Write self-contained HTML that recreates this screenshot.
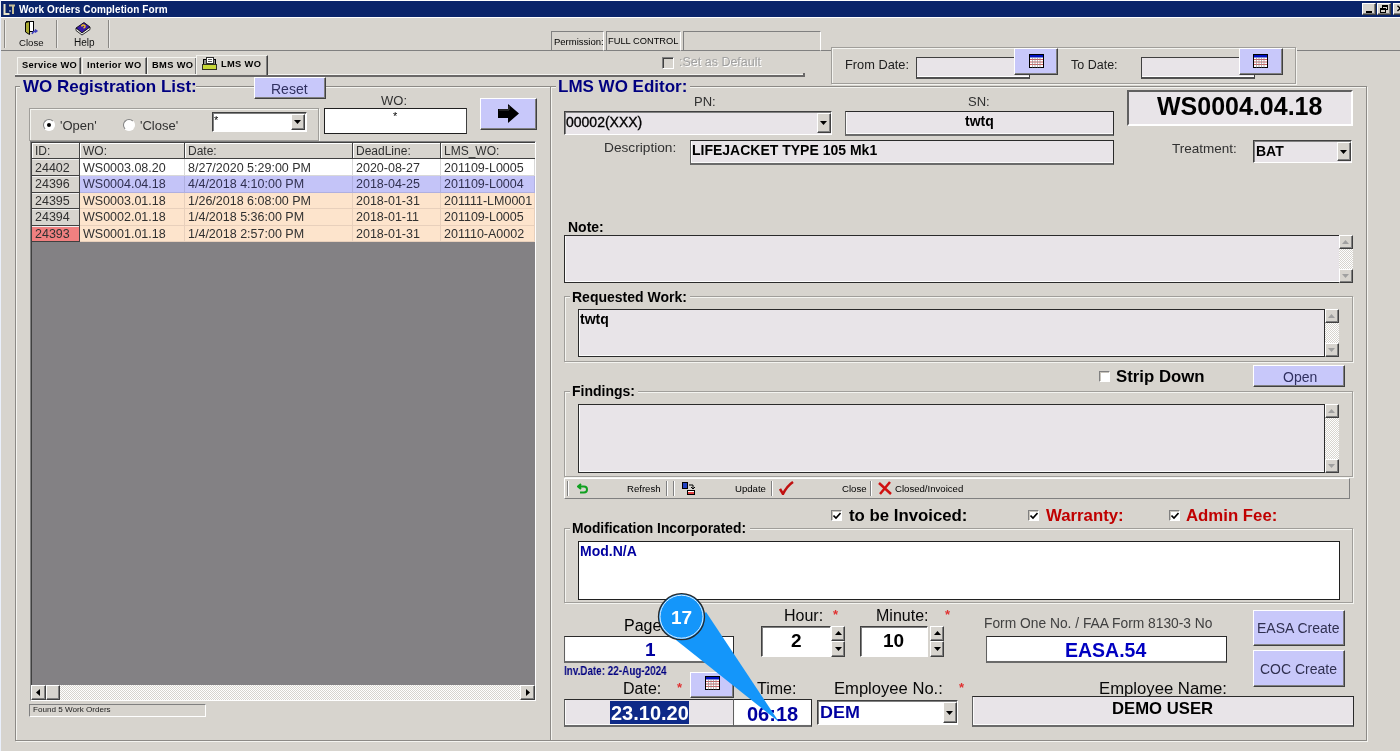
<!DOCTYPE html>
<html><head><meta charset="utf-8">
<style>
*{margin:0;padding:0;box-sizing:border-box}
html,body{width:1400px;height:751px;overflow:hidden;background:#d7d4ce;font-family:"Liberation Sans",sans-serif;color:#000}
.a{position:absolute}
.t{position:absolute;white-space:nowrap;line-height:1;will-change:transform}
.sk{position:absolute;border:1px solid;border-color:#808080 #fff #fff #808080}
.sk2{position:absolute;border:1px solid;border-color:#404040 #fff #fff #404040;box-shadow:inset 1px 1px 0 #808080}
.rz{position:absolute;border:1px solid;border-color:#fff #404040 #404040 #fff;box-shadow:inset -1px -1px 0 #808080}
.et{position:absolute;border:1px solid #a09e9a;box-shadow:1px 1px 0 #f4f4f0, inset 1px 1px 0 #f4f4f0}
.inp{background:#e8e4e8}
.lav{background:#c8c8fa}
.b{font-weight:bold}
.navy{color:#000080}
.cb{position:absolute;width:11px;height:11px;background:#fff;border:1px solid;border-color:#808080 #fff #fff #808080;box-shadow:inset 1px 1px 0 #c8c4bc}
</style></head><body>
<!-- window frame / title -->
<div class="a" style="left:0;top:0;width:1400px;height:1px;background:#fff"></div>
<div class="a" style="left:0;top:0;width:1px;height:751px;background:#eaf0fc"></div>
<div class="a" style="left:1px;top:1px;width:1399px;height:16px;background:#0a246a"></div>
<svg class="a" style="left:3px;top:3px" width="13" height="12" viewBox="0 0 13 12"><path d="M1.5 1v10h5" stroke="#e8e4c8" stroke-width="2" fill="none"/><path d="M6 2.5h6M10 2.5v8.5" stroke="#c8c098" stroke-width="2" fill="none"/><circle cx="7" cy="8" r="0.8" fill="#fff"/></svg>
<div class="t b" style="left:19px;top:4.5px;font-size:10px;color:#fff;letter-spacing:0.1px">Work Orders Completion Form</div>
<div class="rz" style="left:1362px;top:3px;width:14px;height:12px;background:#d7d4ce"><div class="a" style="left:3px;top:7px;width:6px;height:2px;background:#000"></div></div>
<div class="rz" style="left:1377px;top:3px;width:14px;height:12px;background:#d7d4ce"><div class="a" style="left:4px;top:1px;width:6px;height:5px;border:1px solid #000;border-top-width:2px"></div><div class="a" style="left:2px;top:4px;width:6px;height:5px;border:1px solid #000;border-top-width:2px;background:#d7d4ce"></div></div>
<div class="rz" style="left:1393px;top:3px;width:14px;height:12px;background:#d7d4ce"><div class="t b" style="left:2px;top:0px;font-size:10px">✕</div></div>

<!-- toolbar -->
<div class="a" style="left:1px;top:17px;width:1399px;height:1px;background:#fff"></div>
<div class="a" style="left:4px;top:20px;width:2px;height:28px;border-left:1px solid #8a8884;border-right:1px solid #ecebe8"></div>
<div class="a" style="left:56px;top:20px;width:2px;height:28px;border-left:1px solid #8a8884;border-right:1px solid #ecebe8"></div>
<div class="a" style="left:108px;top:20px;width:2px;height:28px;border-left:1px solid #8a8884;border-right:1px solid #ecebe8"></div>
<div class="a" style="left:1px;top:50px;width:1399px;height:1px;background:#808080"></div>
<!-- close icon -->
<svg class="a" style="left:24px;top:20px" width="15" height="16" viewBox="0 0 15 16">
<rect x="2.5" y="1.5" width="7" height="10" fill="#fff" stroke="#000"/>
<path d="M1.5 2.5 L5.5 1.5 L5.5 14.5 L1.5 12 Z" fill="#a8a830" stroke="#000" stroke-width="1"/>
<path d="M8 14 q1 -3 4 -3 M11 9.5 l2 1.5 l-2 1.5" stroke="#4040c0" stroke-width="1.3" fill="none"/>
</svg>
<div class="t" style="left:19px;top:37.6px;font-size:9.6px;color:#101010">Close</div>
<!-- help icon -->
<svg class="a" style="left:75px;top:21px" width="16" height="15" viewBox="0 0 16 15">
<path d="M1 7 L9 1.5 L15 6 L7 12 Z" fill="#3818a8" stroke="#000" stroke-width="0.8"/>
<path d="M1 7 L1 9.5 L7 14 L15 8.5 L15 6 L7 12 Z" fill="#f4f4f4" stroke="#000" stroke-width="0.8"/>
<path d="M6.5 5.5 q1.5 -2.5 3.5 -0.8 q0.5 1.5 -1.5 2.5" stroke="#f0c020" stroke-width="1.5" fill="none"/>
</svg>
<div class="t" style="left:74px;top:38px;font-size:10px;color:#101010">Help</div>

<!-- permission -->
<div class="sk" style="left:551px;top:31px;width:53px;height:20px;border-bottom-color:transparent"></div>
<div class="t" style="left:554px;top:37px;font-size:9.5px">Permission:</div>
<div class="sk" style="left:606px;top:31px;width:75px;height:20px;border-bottom-color:transparent"></div>
<div class="t" style="left:608px;top:37px;font-size:9.3px">FULL CONTROL</div>
<div class="sk" style="left:683px;top:31px;width:138px;height:20px;border-bottom-color:transparent"></div>

<!-- tabs -->
<div class="a" style="left:15px;top:74px;width:790px;height:1px;background:#f4f4f0"></div><div class="a" style="left:15px;top:75px;width:790px;height:2px;background:#6a6868"></div><div class="a" style="left:803px;top:73px;width:2px;height:3px;background:#6a6868"></div>
<div class="rz" style="left:17px;top:57px;width:64px;height:17px;background:#d7d4ce;border-bottom:none;box-shadow:inset -1px 0 0 #808080;border-top-color:#f4f4f0;border-left-color:#f4f4f0"></div>
<div class="t b" style="left:22px;top:61px;font-size:9.3px;letter-spacing:0.35px">Service WO</div>
<div class="rz" style="left:82px;top:57px;width:65px;height:17px;background:#d7d4ce;border-bottom:none;box-shadow:inset -1px 0 0 #808080;border-top-color:#f4f4f0;border-left-color:#f4f4f0"></div>
<div class="t b" style="left:87px;top:61px;font-size:9.3px;letter-spacing:0.35px">Interior WO</div>
<div class="rz" style="left:147px;top:57px;width:50px;height:17px;background:#d7d4ce;border-bottom:none;box-shadow:inset -1px 0 0 #808080;border-top-color:#f4f4f0;border-left-color:#f4f4f0"></div>
<div class="t b" style="left:152px;top:61px;font-size:9.3px;letter-spacing:0.35px">BMS WO</div>
<div class="rz" style="left:196px;top:55px;width:72px;height:20px;background:#d7d4ce;border-bottom:none;box-shadow:inset -1px 0 0 #808080;border-top-color:#f0f0ec;border-left-color:#f4f4f0"></div>
<svg class="a" style="left:202px;top:57px" width="15" height="13" viewBox="0 0 15 13"><rect x="1.5" y="2.5" width="12" height="6" fill="#909090" stroke="#000"/><rect x="4.5" y="0.5" width="7" height="6" fill="#fff" stroke="#303030"/><path d="M6 2.5h4M6 4.5h4" stroke="#606060"/><rect x="0.5" y="7.5" width="14" height="5" fill="#c8d838" stroke="#303020"/></svg>
<div class="t b" style="left:221px;top:60px;font-size:9.3px;letter-spacing:0.35px">LMS WO</div>

<!-- set as default -->
<div class="a" style="left:662px;top:57px;width:12px;height:12px;border:1px solid;border-color:#808080 #fff #fff #808080;box-shadow:inset 1px 1px 0 #404040, inset -1px -1px 0 #d7d4ce"></div>
<div class="t" style="left:679px;top:55.5px;font-size:12.5px;color:#a0a0a0;text-shadow:1px 1px 0 #fff">:Set as Default</div>

<!-- date group -->
<div class="et" style="left:831px;top:47px;width:465px;height:37px;background:#d7d4ce"></div>
<div class="t" style="left:845px;top:58.5px;font-size:12.8px;color:#202020">From Date:</div>
<div class="a inp" style="left:916px;top:57px;width:114px;height:22px;border:1px solid #404040;border-bottom:2px solid #505050;box-shadow:inset 0 -1px 0 #fff"></div>
<div class="rz lav" style="left:1014px;top:48px;width:44px;height:27px"></div><svg class="a" style="left:1029px;top:54px" width="15" height="14" viewBox="0 0 15 14"><rect x="0.5" y="0.5" width="14" height="13" fill="#fff" stroke="#000"/><rect x="1" y="1" width="13" height="2.5" fill="#0010c0"/><path d="M1 5.5h13M1 8h13M1 10.5h13" stroke="#d06060" stroke-width="1"/><path d="M3.5 3.5v10M6 3.5v10M8.5 3.5v10M11 3.5v10" stroke="#909090" stroke-width="0.7"/></svg>
<div class="t" style="left:1071px;top:59px;font-size:12.5px;color:#202020">To Date:</div>
<div class="a inp" style="left:1141px;top:57px;width:114px;height:22px;border:1px solid #404040;border-bottom:2px solid #505050;box-shadow:inset 0 -1px 0 #fff"></div>
<div class="rz lav" style="left:1239px;top:48px;width:44px;height:27px"></div><svg class="a" style="left:1253px;top:54px" width="15" height="14" viewBox="0 0 15 14"><rect x="0.5" y="0.5" width="14" height="13" fill="#fff" stroke="#000"/><rect x="1" y="1" width="13" height="2.5" fill="#0010c0"/><path d="M1 5.5h13M1 8h13M1 10.5h13" stroke="#d06060" stroke-width="1"/><path d="M3.5 3.5v10M6 3.5v10M8.5 3.5v10M11 3.5v10" stroke="#909090" stroke-width="0.7"/></svg>

<!-- ===== LEFT PANEL ===== -->
<div class="et" style="left:15px;top:86px;width:536px;height:655px;border-color:#8c8a86"></div>
<div class="a" style="left:20px;top:80px;width:176px;height:14px;background:#d7d4ce"></div>
<div class="t b navy" style="left:23px;top:78px;font-size:17px">WO Registration List:</div>
<div class="rz lav" style="left:254px;top:77px;width:72px;height:22px"></div>
<div class="t" style="left:271px;top:82px;font-size:14px;color:#303060">Reset</div>

<div class="et" style="left:29px;top:108px;width:290px;height:33px"></div>
<div class="a" style="left:43px;top:119px;width:12px;height:12px;border-radius:50%;background:#fff;border:1px solid;border-color:#808080 #fff #fff #808080"></div>
<div class="a" style="left:47px;top:123px;width:4px;height:4px;border-radius:50%;background:#000"></div>
<div class="t" style="left:60px;top:119px;font-size:13px;color:#303030">'Open'</div>
<div class="a" style="left:123px;top:119px;width:12px;height:12px;border-radius:50%;background:#fff;border:1px solid;border-color:#808080 #fff #fff #808080"></div>
<div class="t" style="left:140px;top:119px;font-size:13px;color:#303030">'Close'</div>
<div class="sk2" style="left:212px;top:112px;width:95px;height:20px;background:#fff"></div>
<div class="t" style="left:214px;top:115px;font-size:11px">*</div>
<div class="rz" style="left:291px;top:114px;width:14px;height:16px;background:#d7d4ce"></div>
<svg class="a" style="left:294px;top:120px" width="8" height="4"><path d="M0 0h7l-3.5 4z" fill="#000"/></svg>

<div class="t" style="left:381px;top:94px;font-size:13px;color:#303030">WO:</div>
<div class="a" style="left:324px;top:108px;width:143px;height:26px;background:#fff;border:1px solid #202020;border-right-color:#404040"></div>
<div class="t" style="left:393px;top:111px;font-size:11px">*</div>
<div class="rz lav" style="left:480px;top:98px;width:57px;height:32px"></div>
<svg class="a" style="left:498px;top:104px" width="22" height="19" viewBox="0 0 22 19"><path d="M0 5h10V0l11 9.5L10 19v-5H0z" fill="#000"/><path d="M1 6h10V2" stroke="#404040" fill="none"/></svg>

<!-- grid -->
<div class="a" style="left:30px;top:141px;width:506px;height:560px;border:1px solid;border-color:#808080 #fff #fff #808080"></div>
<div class="a" style="left:31px;top:142px;width:504px;height:543px;background:#838184;border-left:1px solid #404040;border-top:1px solid #404040"></div>
<div class="a" style="left:32px;top:143px;width:48px;height:16px;background:#d7d4ce;border-right:1px solid #404040;border-bottom:1px solid #404040;box-shadow:inset 1px 1px 0 #fff"></div>
<div class="t" style="left:35px;top:144.5px;font-size:12px;color:#303030">ID:</div>
<div class="a" style="left:80px;top:143px;width:105px;height:16px;background:#d7d4ce;border-right:1px solid #404040;border-bottom:1px solid #404040;box-shadow:inset 1px 1px 0 #fff"></div>
<div class="t" style="left:83px;top:144.5px;font-size:12px;color:#303030">WO:</div>
<div class="a" style="left:185px;top:143px;width:168px;height:16px;background:#d7d4ce;border-right:1px solid #404040;border-bottom:1px solid #404040;box-shadow:inset 1px 1px 0 #fff"></div>
<div class="t" style="left:188px;top:144.5px;font-size:12px;color:#303030">Date:</div>
<div class="a" style="left:353px;top:143px;width:88px;height:16px;background:#d7d4ce;border-right:1px solid #404040;border-bottom:1px solid #404040;box-shadow:inset 1px 1px 0 #fff"></div>
<div class="t" style="left:356px;top:144.5px;font-size:12px;color:#303030">DeadLine:</div>
<div class="a" style="left:441px;top:143px;width:94px;height:16px;background:#d7d4ce;border-right:none;border-bottom:1px solid #404040;box-shadow:inset 1px 1px 0 #fff"></div>
<div class="t" style="left:444px;top:144.5px;font-size:12px;color:#303030">LMS_WO:</div>
<div class="a" style="left:32px;top:159px;width:48px;height:17px;background:#d7d4ce;border-right:1px solid #404040;border-bottom:1px solid #404040;box-shadow:inset 0 1px 0 #f0f0f0"></div>
<div class="t" style="left:35px;top:161.5px;font-size:12.5px;color:#303030">24402</div>
<div class="a" style="left:80px;top:159px;width:105px;height:17px;background:#ffffff;border-right:1px solid #d8d8d8;border-bottom:1px solid #d8d8d8"></div>
<div class="t" style="left:83px;top:161.5px;font-size:12.5px;color:#303030">WS0003.08.20</div>
<div class="a" style="left:185px;top:159px;width:168px;height:17px;background:#ffffff;border-right:1px solid #d8d8d8;border-bottom:1px solid #d8d8d8"></div>
<div class="t" style="left:188px;top:161.5px;font-size:12.5px;color:#303030">8/27/2020 5:29:00 PM</div>
<div class="a" style="left:353px;top:159px;width:88px;height:17px;background:#ffffff;border-right:1px solid #d8d8d8;border-bottom:1px solid #d8d8d8"></div>
<div class="t" style="left:356px;top:161.5px;font-size:12.5px;color:#303030">2020-08-27</div>
<div class="a" style="left:441px;top:159px;width:94px;height:17px;background:#ffffff;border-right:1px solid #d8d8d8;border-bottom:1px solid #d8d8d8"></div>
<div class="t" style="left:444px;top:161.5px;font-size:12.5px;color:#303030">201109-L0005</div>
<div class="a" style="left:32px;top:176px;width:48px;height:17px;background:#d7d4ce;border-right:1px solid #404040;border-bottom:1px solid #404040;box-shadow:inset 0 1px 0 #f0f0f0"></div>
<div class="t" style="left:35px;top:177.5px;font-size:12.5px;color:#303030">24396</div>
<div class="a" style="left:80px;top:176px;width:105px;height:17px;background:#c4c4f8;border-right:1px solid #b0b0e0;border-bottom:1px solid #b0b0e0"></div>
<div class="t" style="left:83px;top:177.5px;font-size:12.5px;color:#303050">WS0004.04.18</div>
<div class="a" style="left:185px;top:176px;width:168px;height:17px;background:#c4c4f8;border-right:1px solid #b0b0e0;border-bottom:1px solid #b0b0e0"></div>
<div class="t" style="left:188px;top:177.5px;font-size:12.5px;color:#303050">4/4/2018 4:10:00 PM</div>
<div class="a" style="left:353px;top:176px;width:88px;height:17px;background:#c4c4f8;border-right:1px solid #b0b0e0;border-bottom:1px solid #b0b0e0"></div>
<div class="t" style="left:356px;top:177.5px;font-size:12.5px;color:#303050">2018-04-25</div>
<div class="a" style="left:441px;top:176px;width:94px;height:17px;background:#c4c4f8;border-right:1px solid #b0b0e0;border-bottom:1px solid #b0b0e0"></div>
<div class="t" style="left:444px;top:177.5px;font-size:12.5px;color:#303050">201109-L0004</div>
<div class="a" style="left:32px;top:193px;width:48px;height:16px;background:#d7d4ce;border-right:1px solid #404040;border-bottom:1px solid #404040;box-shadow:inset 0 1px 0 #f0f0f0"></div>
<div class="t" style="left:35px;top:195px;font-size:12.5px;color:#303030">24395</div>
<div class="a" style="left:80px;top:193px;width:105px;height:16px;background:#fde4cc;border-right:1px solid #e8d0bc;border-bottom:1px solid #e8d0bc"></div>
<div class="t" style="left:83px;top:195px;font-size:12.5px;color:#303030">WS0003.01.18</div>
<div class="a" style="left:185px;top:193px;width:168px;height:16px;background:#fde4cc;border-right:1px solid #e8d0bc;border-bottom:1px solid #e8d0bc"></div>
<div class="t" style="left:188px;top:195px;font-size:12.5px;color:#303030">1/26/2018 6:08:00 PM</div>
<div class="a" style="left:353px;top:193px;width:88px;height:16px;background:#fde4cc;border-right:1px solid #e8d0bc;border-bottom:1px solid #e8d0bc"></div>
<div class="t" style="left:356px;top:195px;font-size:12.5px;color:#303030">2018-01-31</div>
<div class="a" style="left:441px;top:193px;width:94px;height:16px;background:#fde4cc;border-right:1px solid #e8d0bc;border-bottom:1px solid #e8d0bc"></div>
<div class="t" style="left:444px;top:195px;font-size:12.5px;color:#303030">201111-LM0001</div>
<div class="a" style="left:32px;top:209px;width:48px;height:17px;background:#d7d4ce;border-right:1px solid #404040;border-bottom:1px solid #404040;box-shadow:inset 0 1px 0 #f0f0f0"></div>
<div class="t" style="left:35px;top:211px;font-size:12.5px;color:#303030">24394</div>
<div class="a" style="left:80px;top:209px;width:105px;height:17px;background:#fde4cc;border-right:1px solid #e8d0bc;border-bottom:1px solid #e8d0bc"></div>
<div class="t" style="left:83px;top:211px;font-size:12.5px;color:#303030">WS0002.01.18</div>
<div class="a" style="left:185px;top:209px;width:168px;height:17px;background:#fde4cc;border-right:1px solid #e8d0bc;border-bottom:1px solid #e8d0bc"></div>
<div class="t" style="left:188px;top:211px;font-size:12.5px;color:#303030">1/4/2018 5:36:00 PM</div>
<div class="a" style="left:353px;top:209px;width:88px;height:17px;background:#fde4cc;border-right:1px solid #e8d0bc;border-bottom:1px solid #e8d0bc"></div>
<div class="t" style="left:356px;top:211px;font-size:12.5px;color:#303030">2018-01-11</div>
<div class="a" style="left:441px;top:209px;width:94px;height:17px;background:#fde4cc;border-right:1px solid #e8d0bc;border-bottom:1px solid #e8d0bc"></div>
<div class="t" style="left:444px;top:211px;font-size:12.5px;color:#303030">201109-L0005</div>
<div class="a" style="left:32px;top:226px;width:48px;height:16px;background:#f08080;border-right:1px solid #404040;border-bottom:1px solid #404040;box-shadow:inset 0 1px 0 #f0f0f0"></div>
<div class="t" style="left:35px;top:227.5px;font-size:12.5px;color:#303030">24393</div>
<div class="a" style="left:80px;top:226px;width:105px;height:16px;background:#fde4cc;border-right:1px solid #e8d0bc;border-bottom:1px solid #e8d0bc"></div>
<div class="t" style="left:83px;top:227.5px;font-size:12.5px;color:#303030">WS0001.01.18</div>
<div class="a" style="left:185px;top:226px;width:168px;height:16px;background:#fde4cc;border-right:1px solid #e8d0bc;border-bottom:1px solid #e8d0bc"></div>
<div class="t" style="left:188px;top:227.5px;font-size:12.5px;color:#303030">1/4/2018 2:57:00 PM</div>
<div class="a" style="left:353px;top:226px;width:88px;height:16px;background:#fde4cc;border-right:1px solid #e8d0bc;border-bottom:1px solid #e8d0bc"></div>
<div class="t" style="left:356px;top:227.5px;font-size:12.5px;color:#303030">2018-01-31</div>
<div class="a" style="left:441px;top:226px;width:94px;height:16px;background:#fde4cc;border-right:1px solid #e8d0bc;border-bottom:1px solid #e8d0bc"></div>
<div class="t" style="left:444px;top:227.5px;font-size:12.5px;color:#303030">201110-A0002</div>
<!-- hscroll -->
<div class="a" style="left:31px;top:685px;width:504px;height:15px;background:repeating-conic-gradient(#fff 0 25%, #d7d4ce 0 50%) 0 0/2px 2px"></div>
<div class="rz" style="left:31px;top:685px;width:15px;height:15px;background:#d7d4ce"></div>
<svg class="a" style="left:36px;top:689px" width="4" height="7"><path d="M4 0v7L0 3.5z" fill="#000"/></svg>
<div class="rz" style="left:46px;top:685px;width:14px;height:15px;background:#d7d4ce"></div>
<div class="rz" style="left:520px;top:685px;width:15px;height:15px;background:#d7d4ce"></div>
<svg class="a" style="left:526px;top:689px" width="4" height="7"><path d="M0 0v7L4 3.5z" fill="#000"/></svg>
<div class="sk" style="left:29px;top:704px;width:177px;height:13px"></div>
<div class="t" style="left:33px;top:706px;font-size:8.1px;color:#202020">Found 5 Work Orders</div>

<!-- ===== RIGHT PANEL ===== -->
<div class="et" style="left:550px;top:86px;width:817px;height:655px;border-color:#8c8a86"></div>
<div class="a" style="left:556px;top:80px;width:134px;height:14px;background:#d7d4ce"></div>
<div class="t b navy" style="left:558px;top:78px;font-size:17px">LMS WO Editor:</div>

<div class="t" style="left:694px;top:95px;font-size:13px;color:#303030">PN:</div>
<div class="sk2 inp" style="left:564px;top:111px;width:268px;height:24px"></div>
<div class="t" style="left:566px;top:114.5px;font-size:14px;-webkit-text-stroke:0.35px #000">00002(XXX)</div>
<div class="rz" style="left:817px;top:113px;width:14px;height:20px;background:#d7d4ce"></div>
<svg class="a" style="left:820px;top:121px" width="8" height="4"><path d="M0 0h7l-3.5 4z" fill="#000"/></svg>

<div class="t" style="left:968px;top:95px;font-size:13px;color:#303030">SN:</div>
<div class="a inp" style="left:845px;top:111px;width:269px;height:25px;border:1px solid #2a2a2a;border-left-color:#606060;border-bottom:2px solid #6a6a6a;box-shadow:inset 1px -1px 0 #fbfbfb"></div>
<div class="t b" style="left:965px;top:114px;font-size:14px">twtq</div>

<div class="a inp" style="left:1127px;top:90px;width:226px;height:36px;border:2px solid;border-color:#606060 #fff #fff #606060"></div>
<div class="t b" style="left:1157px;top:93.5px;font-size:25px">WS0004.04.18</div>

<div class="t" style="left:604px;top:141px;font-size:13.7px;color:#303030">Description:</div>
<div class="a inp" style="left:690px;top:140px;width:424px;height:25px;border:1px solid #2a2a2a;border-left-color:#606060;border-bottom:2px solid #6a6a6a;box-shadow:inset 1px -1px 0 #fbfbfb"></div>
<div class="t b" style="left:692px;top:142.5px;font-size:14px">LIFEJACKET TYPE 105 Mk1</div>

<div class="t" style="left:1172px;top:141.5px;font-size:13.5px;color:#303030">Treatment:</div>
<div class="sk2 inp" style="left:1253px;top:140px;width:99px;height:23px"></div>
<div class="t b" style="left:1256px;top:143.5px;font-size:14px">BAT</div>
<div class="rz" style="left:1337px;top:142px;width:14px;height:19px;background:#d7d4ce"></div>
<svg class="a" style="left:1340px;top:150px" width="8" height="4"><path d="M0 0h7l-3.5 4z" fill="#000"/></svg>

<!-- note -->
<div class="t b" style="left:568px;top:220px;font-size:14px">Note:</div>
<div class="a inp" style="left:564px;top:235px;width:776px;height:48px;border:1px solid #2a2a2a;box-shadow:inset 1px -1px 0 #fbfbfb"></div>
<div class="a" id="vs1" style="left:1339px;top:235px;width:14px;height:48px;background:repeating-conic-gradient(#fff 0 25%, #d7d4ce 0 50%) 0 0/2px 2px"></div>
<div class="rz" style="left:1339px;top:235px;width:14px;height:14px;background:#d7d4ce"></div>
<div class="rz" style="left:1339px;top:269px;width:14px;height:14px;background:#d7d4ce"></div>
<svg class="a" style="left:1342px;top:240px" width="7" height="4"><path d="M0 4h7L3.5 0z" fill="#a0a0a0"/></svg>
<svg class="a" style="left:1342px;top:274px" width="7" height="4"><path d="M0 0h7L3.5 4z" fill="#a0a0a0"/></svg>

<!-- requested work -->
<div class="et" style="left:564px;top:296px;width:789px;height:66px"></div>
<div class="a" style="left:570px;top:290px;width:120px;height:12px;background:#d7d4ce"></div>
<div class="t b" style="left:572px;top:290px;font-size:14px">Requested Work:</div>
<div class="a inp" style="left:578px;top:309px;width:747px;height:48px;border:1px solid #2a2a2a;box-shadow:inset 1px -1px 0 #fbfbfb"></div>
<div class="t b" style="left:580px;top:312px;font-size:14px">twtq</div>
<div class="a" style="left:1325px;top:309px;width:14px;height:48px;background:repeating-conic-gradient(#fff 0 25%, #d7d4ce 0 50%) 0 0/2px 2px"></div>
<div class="rz" style="left:1325px;top:309px;width:14px;height:14px;background:#d7d4ce"></div>
<div class="rz" style="left:1325px;top:343px;width:14px;height:14px;background:#d7d4ce"></div>
<svg class="a" style="left:1328px;top:314px" width="7" height="4"><path d="M0 4h7L3.5 0z" fill="#a0a0a0"/></svg>
<svg class="a" style="left:1328px;top:348px" width="7" height="4"><path d="M0 0h7L3.5 4z" fill="#a0a0a0"/></svg>

<!-- strip down / open -->
<div class="cb" style="left:1099px;top:371px"></div>
<div class="t b" style="left:1116px;top:368.5px;font-size:16.8px">Strip Down</div>
<div class="rz lav" style="left:1253px;top:365px;width:92px;height:22px"></div>
<div class="t" style="left:1283px;top:370px;font-size:14px;color:#303060">Open</div>

<!-- findings -->
<div class="et" style="left:564px;top:391px;width:789px;height:86px"></div>
<div class="a" style="left:570px;top:385px;width:68px;height:12px;background:#d7d4ce"></div>
<div class="t b" style="left:572px;top:384px;font-size:14px">Findings:</div>
<div class="a inp" style="left:578px;top:404px;width:747px;height:69px;border:1px solid #2a2a2a;box-shadow:inset 1px -1px 0 #fbfbfb"></div>
<div class="a" style="left:1325px;top:404px;width:14px;height:69px;background:repeating-conic-gradient(#fff 0 25%, #d7d4ce 0 50%) 0 0/2px 2px"></div>
<div class="rz" style="left:1325px;top:404px;width:14px;height:14px;background:#d7d4ce"></div>
<div class="rz" style="left:1325px;top:459px;width:14px;height:14px;background:#d7d4ce"></div>
<svg class="a" style="left:1328px;top:409px" width="7" height="4"><path d="M0 4h7L3.5 0z" fill="#a0a0a0"/></svg>
<svg class="a" style="left:1328px;top:464px" width="7" height="4"><path d="M0 0h7L3.5 4z" fill="#a0a0a0"/></svg>

<!-- findings toolbar -->
<div class="a" style="left:564px;top:478px;width:786px;height:21px;border:1px solid;border-color:#fff #808080 #808080 #fff"></div>
<div class="a" style="left:567px;top:481px;width:2px;height:15px;border-left:1px solid #808080;border-right:1px solid #fff"></div>
<svg class="a" style="left:577px;top:483px" width="12" height="11" viewBox="0 0 12 11"><path d="M4 1 L1 3.5 L4 6 M1.5 3.5 H7 a3 3 0 0 1 0 6 H3" stroke="#10a020" stroke-width="2" fill="none"/></svg>
<div class="t" style="left:627px;top:484px;font-size:9.6px;color:#000">Refresh</div>
<div class="a" style="left:666px;top:481px;width:2px;height:15px;border-left:1px solid #808080;border-right:1px solid #fff"></div>
<div class="a" style="left:673px;top:481px;width:2px;height:15px;border-left:1px solid #808080;border-right:1px solid #fff"></div>
<svg class="a" style="left:682px;top:482px" width="14" height="13" viewBox="0 0 14 13"><rect x="0.5" y="0.5" width="5" height="6" fill="#2040c0" stroke="#000"/><path d="M7 3h4v4 M9 5l2 2l2-2" stroke="#000" fill="none"/><rect x="5.5" y="8.5" width="7" height="4" fill="#fff" stroke="#000"/><rect x="6" y="10" width="6" height="2" fill="#e04040"/></svg>
<div class="t" style="left:735px;top:484px;font-size:9.6px;color:#000">Update</div>
<div class="a" style="left:771px;top:481px;width:2px;height:15px;border-left:1px solid #808080;border-right:1px solid #fff"></div>
<svg class="a" style="left:779px;top:481px" width="15" height="14" viewBox="0 0 15 14"><path d="M1 8 L4 13 Q8 5 14 1" stroke="#c01010" stroke-width="2.5" fill="none"/></svg>
<div class="t" style="left:842px;top:484px;font-size:9.6px;color:#000">Close</div>
<div class="a" style="left:870px;top:481px;width:2px;height:15px;border-left:1px solid #808080;border-right:1px solid #fff"></div>
<svg class="a" style="left:878px;top:481px" width="14" height="14" viewBox="0 0 14 14"><path d="M1 2 L13 13 M12 1 L2 13" stroke="#d01010" stroke-width="2.5" fill="none"/></svg>
<div class="t" style="left:895px;top:484px;font-size:9.6px;color:#000">Closed/Invoiced</div>

<!-- invoiced checkboxes -->
<div class="cb" style="left:831px;top:510px"></div>
<svg class="a" style="left:833px;top:512px" width="8" height="8"><path d="M0.5 3.5 L3 6 L7.5 1" stroke="#000" stroke-width="1.6" fill="none"/></svg>
<div class="t b" style="left:849px;top:507.5px;font-size:16.8px">to be Invoiced:</div>
<div class="cb" style="left:1028px;top:510px"></div>
<svg class="a" style="left:1030px;top:512px" width="8" height="8"><path d="M0.5 3.5 L3 6 L7.5 1" stroke="#000" stroke-width="1.6" fill="none"/></svg>
<div class="t b" style="left:1046px;top:508px;font-size:16.8px;color:#c00000">Warranty:</div>
<div class="cb" style="left:1169px;top:510px"></div>
<svg class="a" style="left:1171px;top:512px" width="8" height="8"><path d="M0.5 3.5 L3 6 L7.5 1" stroke="#000" stroke-width="1.6" fill="none"/></svg>
<div class="t b" style="left:1186px;top:508px;font-size:16.8px;color:#c00000">Admin Fee:</div>

<!-- modification -->
<div class="et" style="left:564px;top:528px;width:789px;height:75px"></div>
<div class="a" style="left:570px;top:522px;width:180px;height:12px;background:#d7d4ce"></div>
<div class="t b" style="left:572px;top:522.2px;font-size:13.8px">Modification Incorporated:</div>
<div class="a" style="left:578px;top:541px;width:762px;height:59px;background:#fff;border:1px solid #202020"></div>
<div class="t b" style="left:580px;top:544px;font-size:14px;color:#0000a0">Mod.N/A</div>

<!-- page -->
<div class="t" style="left:624px;top:617.5px;font-size:16px;color:#000">Page:</div>
<div class="a" style="left:564px;top:636px;width:170px;height:27px;background:#fff;border:1px solid #2a2a2a;border-left-color:#606060;border-bottom:2px solid #6a6a6a;box-shadow:inset 1px -1px 0 #fbfbfb"></div>
<div class="t b" style="left:645px;top:640px;font-size:19px;color:#0000a0">1</div>
<div class="t b" style="left:564px;top:665px;font-size:12px;color:#000080;transform:scaleX(0.824);transform-origin:0 0">Inv.Date: 22-Aug-2024</div>

<div class="t" style="left:784px;top:607.5px;font-size:16px;color:#080808">Hour:</div>
<div class="t" style="left:833px;top:608px;font-size:13px;font-weight:bold;color:#e03030">*</div>
<div class="sk2" style="left:761px;top:626px;width:70px;height:31px;background:#fff"></div>
<div class="t b" style="left:791px;top:631px;font-size:19px">2</div>
<div class="rz" style="left:831px;top:626px;width:14px;height:15px;background:#d7d4ce"></div>
<div class="rz" style="left:831px;top:641px;width:14px;height:16px;background:#d7d4ce"></div>
<svg class="a" style="left:835px;top:631px" width="7" height="4"><path d="M0 4h7L3.5 0z" fill="#000"/></svg>
<svg class="a" style="left:835px;top:647px" width="7" height="4"><path d="M0 0h7L3.5 4z" fill="#000"/></svg>

<div class="t" style="left:876px;top:607.5px;font-size:16px;color:#080808">Minute:</div>
<div class="t" style="left:945px;top:608px;font-size:13px;font-weight:bold;color:#e03030">*</div>
<div class="sk2" style="left:860px;top:626px;width:68px;height:31px;background:#fff"></div>
<div class="t b" style="left:883px;top:631px;font-size:19px">10</div>
<div class="rz" style="left:930px;top:626px;width:14px;height:15px;background:#d7d4ce"></div>
<div class="rz" style="left:930px;top:641px;width:14px;height:16px;background:#d7d4ce"></div>
<svg class="a" style="left:934px;top:631px" width="7" height="4"><path d="M0 4h7L3.5 0z" fill="#000"/></svg>
<svg class="a" style="left:934px;top:647px" width="7" height="4"><path d="M0 0h7L3.5 4z" fill="#000"/></svg>

<div class="t" style="left:984px;top:617px;font-size:13.8px;color:#404040">Form One No. / FAA Form 8130-3 No</div>
<div class="a" style="left:986px;top:636px;width:241px;height:27px;background:#fff;border:1px solid #2a2a2a;border-left-color:#606060;border-bottom:2px solid #6a6a6a;box-shadow:inset 1px -1px 0 #fbfbfb"></div>
<div class="t b" style="left:1065px;top:640.8px;font-size:19.5px;color:#0000c0">EASA.54</div>

<div class="rz lav" style="left:1253px;top:610px;width:92px;height:36px"></div>
<div class="t" style="left:1257px;top:621px;font-size:14px;color:#303050">EASA Create</div>
<div class="rz lav" style="left:1253px;top:650px;width:92px;height:37px"></div>
<div class="t" style="left:1260px;top:662px;font-size:14px;color:#303050">COC Create</div>

<!-- date row -->
<div class="t" style="left:623px;top:681px;font-size:16px;color:#080808">Date:</div>
<div class="t" style="left:677px;top:681px;font-size:13px;font-weight:bold;color:#e03030">*</div>
<div class="rz lav" style="left:690px;top:672px;width:44px;height:26px"></div><svg class="a" style="left:705px;top:676px" width="15" height="14" viewBox="0 0 15 14"><rect x="0.5" y="0.5" width="14" height="13" fill="#fff" stroke="#000"/><rect x="1" y="1" width="13" height="2.5" fill="#0010c0"/><path d="M1 5.5h13M1 8h13M1 10.5h13" stroke="#d06060" stroke-width="1"/><path d="M3.5 3.5v10M6 3.5v10M8.5 3.5v10M11 3.5v10" stroke="#909090" stroke-width="0.7"/></svg>
<div class="t" style="left:757px;top:681px;font-size:16px;color:#080808">Time:</div>
<div class="t" style="left:834px;top:680.8px;font-size:16.6px;color:#080808">Employee No.:</div>
<div class="t" style="left:959px;top:681px;font-size:13px;font-weight:bold;color:#e03030">*</div>
<div class="t" style="left:1099px;top:681px;font-size:16.7px;color:#080808">Employee Name:</div>

<div class="a inp" style="left:564px;top:699px;width:170px;height:28px;border:1px solid #2a2a2a;border-left-color:#606060;border-bottom:2px solid #6a6a6a;box-shadow:inset 1px -1px 0 #fbfbfb"></div>
<div class="a" style="left:610px;top:701px;width:79px;height:23px;background:#0e2a88"></div>
<div class="t" style="left:610.5px;top:703.3px;font-size:20px;color:#fff;font-weight:bold">23.10.20</div>
<div class="a" style="left:733px;top:699px;width:79px;height:28px;background:#fff;border:1px solid #2a2a2a;border-left-color:#606060;border-bottom:2px solid #6a6a6a;box-shadow:inset 1px -1px 0 #fbfbfb"></div>
<div class="t b" style="left:746.5px;top:703.5px;font-size:20px;color:#0000a0">06:18</div>
<div class="sk2" style="left:817px;top:700px;width:141px;height:25px;background:#fff"></div>
<div class="t b" style="left:820px;top:704.5px;font-size:16px;color:#0000a0;transform:scaleX(1.12);transform-origin:0 0">DEM</div>
<div class="rz" style="left:943px;top:702px;width:14px;height:21px;background:#d7d4ce"></div>
<svg class="a" style="left:946px;top:711px" width="8" height="4"><path d="M0 0h7l-3.5 4z" fill="#000"/></svg>
<div class="a inp" style="left:972px;top:696px;width:382px;height:31px;border:1px solid #2a2a2a;border-left-color:#606060;border-bottom:2px solid #6a6a6a;box-shadow:inset 1px -1px 0 #fbfbfb"></div>
<div class="t b" style="left:1112px;top:700.8px;font-size:16.7px">DEMO USER</div>

<!-- badge -->
<svg class="a" style="left:650px;top:585px" width="140" height="145" viewBox="650 585 140 145">
<path d="M676 640 L706 612 L779 722 Z" fill="#1496fa"/>
<circle cx="681.5" cy="616.7" r="23" fill="#1496fa" stroke="#282828" stroke-width="1.3"/>
<circle cx="681.5" cy="616.7" r="21.5" fill="none" stroke="#e0f0ff" stroke-width="1"/>
</svg>
<div class="t b" style="left:671px;top:607.5px;font-size:19px;color:#fff">17</div>
